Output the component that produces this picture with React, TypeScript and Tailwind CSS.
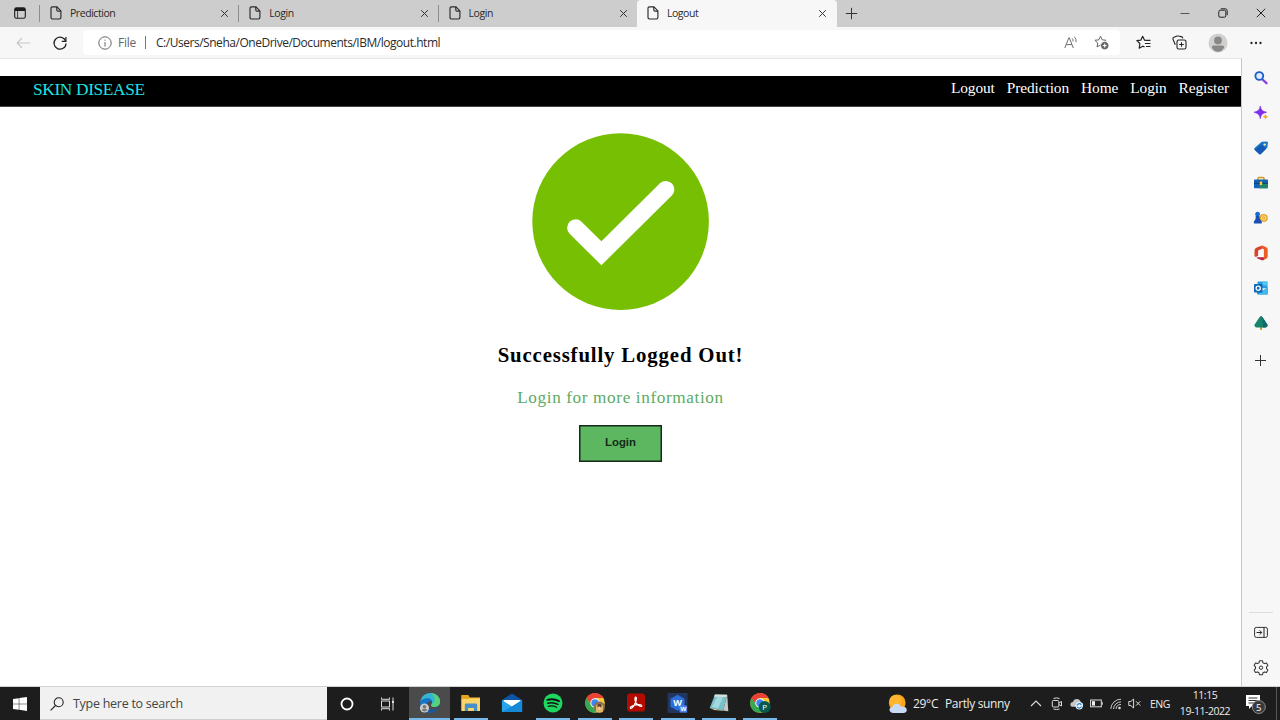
import type { ReactNode } from "react";

const UI = "font-['Open_Sans','Noto_Sans',sans-serif]";

function Cross() {
  return (
    <svg width="9" height="9" viewBox="0 0 9 9" fill="none" stroke="#333" strokeWidth="1">
      <path d="M1.2 1.2 7.8 7.8M7.8 1.2 1.2 7.8" />
    </svg>
  );
}

function PageIcon() {
  return (
    <svg width="12" height="14" viewBox="0 0 12 14" fill="none" stroke="#2a2a2a" strokeWidth="1.15">
      <path d="M2.4 .9H7l3.9 4v6.7c0 .9-.5 1.4-1.4 1.4H2.4C1.5 13 1 12.500 1 11.600V2.300C1 1.400 1.500.9 2.400.9Z" />
      <path d="M6.800 1v2.900c0 .8.4 1.200 1.200 1.200h2.900" />
    </svg>
  );
}

function Tab({ title, active }: { title: string; active?: boolean }) {
  return (
    <div
      className={
        active
          ? "-ml-px flex h-[27px] w-[200px] items-center rounded-t-[4px] bg-[#f7f7f7] pb-px pl-[10px] pr-[10px]"
          : "flex h-[27px] w-[199.300px] items-center pb-px pl-[10px] pr-[10px]"
      }
    >
      <PageIcon />
      <span className="ml-[8px] flex-1 text-[10.5px] leading-[14px] tracking-[-0.450px] text-[#2a2a2a]">{title}</span>
      <Cross />
    </div>
  );
}

function TabBar() {
  return (
    <div className="flex h-[27px] items-center bg-[#cdcdcd]">
      <div className="flex w-[39px] justify-center pb-px pl-px">
        <svg width="12" height="12" viewBox="0 0 12 12" fill="none" stroke="#1c1c1c">
          <rect x=".7" y=".7" width="10.600" height="10.600" rx="1.800" strokeWidth="1.100" />
          <path d="M1 2.500h10" strokeWidth="3" />
          <path d="M3.600 4v7" strokeWidth=".8" />
        </svg>
      </div>
      <div className="h-[17px] w-px bg-[#8d8d8d]" />
      <Tab title="Prediction" />
      <div className="-ml-px h-[17px] w-px bg-[#8d8d8d]" />
      <Tab title="Login" />
      <div className="-ml-px h-[17px] w-px bg-[#8d8d8d]" />
      <Tab title="Login" />
      <Tab title="Logout" active />
      <svg className="mb-px ml-[8px]" width="13" height="13" viewBox="0 0 13 13" stroke="#333" strokeWidth="1">
        <path d="M6.500 .8v11.400M.8 6.500h11.400" />
      </svg>
      <div className="ml-auto flex items-center gap-[28px] pb-px pr-[14px]">
        <svg width="10" height="10" viewBox="0 0 10 10" stroke="#555"><path d="M.5 5.500h9" /></svg>
        <svg width="10" height="10" viewBox="0 0 10 10" fill="none" stroke="#222">
          <rect x=".8" y="2.200" width="7" height="7" rx="1.300" />
          <path d="M2.800 .8h4.400c1.300 0 2 .7 2 2v4.400" />
        </svg>
        <svg width="10" height="10" viewBox="0 0 10 10" stroke="#222"><path d="M.8 .8l8.400 8.400M9.200 .8.8 9.200" /></svg>
      </div>
    </div>
  );
}

const STAR = "M6.500 1.200 8.200 4.800l3.900.5-2.900 2.700.8 3.900-3.500-1.900L3 11.900l.8-3.900L.9 5.300l3.900-.5Z";

function Toolbar() {
  return (
    <div className="flex h-[32px] items-center bg-[#f7f7f7] pb-px">
      <svg className="ml-[16px]" width="15" height="12" viewBox="0 0 15 12" fill="none" stroke="#c6c6c6" strokeWidth="1.100">
        <path d="M14 6H1.200M6 1 1.100 6 6 11" />
      </svg>
      <svg className="ml-[21px]" width="16" height="16" viewBox="0 0 16 16" fill="none" stroke="#222" strokeWidth="1.250">
        <path d="M13.700 6.300A6 6 0 1 0 14 8.400" />
        <path d="M13.900 2v4.300H9.800" />
      </svg>
      <div className="ml-[15px] flex h-[25px] w-[1037px] items-center rounded-[4px] bg-white pl-[15px] pr-[11px]">
        <svg width="14" height="14" viewBox="0 0 14 14" fill="none" stroke="#666" strokeWidth="1">
          <circle cx="7" cy="7" r="6.200" />
          <path d="M7 6v4.500M7 3.600v1.200" />
        </svg>
        <span className="ml-[6px] w-[18px] whitespace-nowrap text-[12px] leading-[16px] tracking-[-0.250px] text-[#666]">File</span>
        <div className="ml-[9px] h-[13px] w-px bg-[#777]" />
        <span className="ml-[10px] flex-1 whitespace-nowrap text-[12px] leading-[16px] tracking-[-0.470px] text-[#2b2b2b]">
          C:/Users/Sneha/OneDrive/Documents/IBM/logout.html
        </span>
        <svg width="14" height="13" viewBox="0 0 14 13" fill="none" stroke="#666" strokeWidth=".95">
          <path d="M.8 12 4.900 1.800h.4L9.300 12M2.200 8.600h5.700" />
          <path d="M8.200 2.400q1.300 1.300.8 3M10.300 .8q2.400 2.300 1.700 5.300" />
        </svg>
        <svg className="ml-[16px]" width="15" height="15" viewBox="0 0 15 15" fill="none" stroke="#666">
          <path d={STAR} strokeLinejoin="round" />
          <circle cx="10.700" cy="10.600" r="4.200" fill="#666" stroke="#fff" strokeWidth=".8" />
          <path d="M10.700 8.600v4M8.700 10.600h4" stroke="#fff" />
        </svg>
      </div>
      <svg className="ml-[16px]" width="15" height="15" viewBox="0 0 14 14" fill="none" stroke="#222" strokeWidth="1.100" strokeLinejoin="round">
        <path d="M8.500 5 8 4.900 6.200 1.200 4.500 4.800.8 5.300l2.800 2.600L3 12.300l3.300-1.900 1.700.8M8.600 5H13.500M8.300 7.900h5.200M9.300 10.700h4.200" />
      </svg>
      <svg className="ml-[21px]" width="15" height="15" viewBox="0 0 15 15" fill="none" stroke="#222" strokeWidth="1.100">
        <rect x="5" y="5" width="9" height="9" rx="1.800" />
        <path d="M9.500 7.200v4.600M7.200 9.500h4.600" />
        <path d="M3.300 9.700 1.100 4.500C.7 3.400 1 2.600 2 2.200L5 1.100c1.200-.4 2.300-.1 3.500.3 1.300.3 2 .7 2.500 1.900" />
      </svg>
      <svg className="ml-[21px]" width="20" height="20" viewBox="0 0 20 20">
        <circle cx="10" cy="10" r="9.500" fill="#d2d0ce" />
        <circle cx="10" cy="7.400" r="3.900" fill="#8a8886" />
        <path d="M3.800 14.200q0-1.700 1.800-1.700h8.800q1.800 0 1.800 1.700-2.200 4.600-6.200 4.600t-6.200-4.600Z" fill="#8a8886" />
      </svg>
      <svg className="ml-[22px]" width="12" height="4" viewBox="0 0 12 4" fill="#222">
        <circle cx="1.500" cy="2" r="1.150" /><circle cx="6" cy="2" r="1.150" /><circle cx="10.500" cy="2" r="1.150" />
      </svg>
    </div>
  );
}

function SideItem({ children }: { children: ReactNode }) {
  return (
    <div className="flex h-[35px] shrink-0 items-center justify-center">
      <svg width="16" height="16" viewBox="0 0 16 16" fill="none">{children}</svg>
    </div>
  );
}

function Sidebar() {
  return (
    <aside className="flex w-[39px] flex-col border-l border-[#c9c9c9] bg-[#f7f7f7] pt-[2px]">
      <SideItem>
        <path d="m9.500 9.500 4 3.700" stroke="#8b3fd9" strokeWidth="2.300" strokeLinecap="round" />
        <circle cx="6.300" cy="6" r="3.900" fill="#dcecff" stroke="#1c5fc6" strokeWidth="1.900" />
      </SideItem>
      <SideItem>
        <path d="M7.300 1c.9 4 1.700 5 6.200 6.300-4.500 1.200-5.300 2.300-6.200 6.400C6.400 9.600 5.500 8.500 1 7.300 5.500 6 6.400 5 7.300 1Z" fill="#7a2ee6" stroke="#8f3af0" strokeWidth=".8" />
        <path d="M12.400 8.800c.5 2 .9 2.400 2.900 2.900-2 .5-2.400 1-2.900 3-.5-2-.9-2.500-2.900-3 2-.5 2.400-.9 2.900-2.900Z" fill="#f0a91e" />
      </SideItem>
      <SideItem>
        <path d="M8.700 1.800 14 1.500c.6 0 .9.300.9.900l-.5 5.200-6.500 6.500c-.6.6-1.200.6-1.800 0L1.600 9.800c-.6-.6-.6-1.200 0-1.800Z" fill="#1877c8" />
        <path d="m1.600 9.800 6.600-5 5 4-5.300 5.300c-.6.6-1.200.6-1.800 0Z" fill="#1559b4" />
        <circle cx="11.700" cy="4.600" r="1.200" fill="#ffe6a4" />
      </SideItem>
      <SideItem>
        <path d="M5 5V3.400c0-.7.300-1 1-1h4c.7 0 1 .3 1 1V5" stroke="#d69a1e" strokeWidth="1.500" />
        <path d="M1 5.600c0-.7.400-1.100 1.100-1.100h11.800c.7 0 1.100.4 1.100 1.100v6.600c0 .7-.4 1.100-1.100 1.100H2.100c-.7 0-1.100-.4-1.100-1.100Z" fill="#1262b3" />
        <path d="M6 8.500h9v3.700c0 .7-.4 1.100-1.100 1.100H6Z" fill="#21856b" />
        <rect x="1" y="7.900" width="14" height="1" fill="#0b456f" />
        <rect x="6.800" y="6.600" width="2.400" height="3.500" rx=".6" fill="#ffc83d" />
      </SideItem>
      <SideItem>
        <circle cx="10.700" cy="8" r="4.100" fill="#e7a52c" />
        <circle cx="10.700" cy="8" r="2.200" stroke="#ffe29b" />
        <circle cx="10.700" cy="8" r=".8" fill="#ffe29b" />
        <circle cx="4.600" cy="4.200" r="2.400" fill="#1e68d2" />
        <path d="M2.600 6h4c-.2 2 .2 3.300 1.600 4.800.8.800.8 2.200.3 2.700H1.200c-.6-.8-.5-1.800.2-2.700C2.700 9.300 2.900 8 2.600 6Z" fill="#174fb5" />
      </SideItem>
      <SideItem>
        <path d="M9.300.6 5 2.100C2.500 3 1.500 4 1.500 6v4.500c0 1 .9 1.700 1.900 1.200l1.700-.9V6.300c0-.7.300-1.100 1-1.400L9.600 3.600Z" fill="#d8432b" />
        <path d="m9.300.6 3.500 1.500c1.200.5 1.900 1.300 1.900 2.700v6.400c0 1.400-.7 2.200-1.900 2.700L9.300 15.400 10.900 12V4.500L9.600 3.600 7.500 2Z" fill="#ea5b26" />
        <path d="M4.500 12.200h6.400v1.500c0 1-.8 1.900-2 1.500L4.500 13.600c-1-.4-.9-1.400 0-1.400Z" fill="#b92442" />
      </SideItem>
      <SideItem>
        <path d="M4.500 2.200c0-.5.200-.7.700-.7h8.600c.5 0 .7.200.7.700v6h-10Z" fill="#299be0" />
        <path d="M9.500 1.500h5v4h-5Z" fill="#50c8f1" />
        <path d="m15 7-5.500 4L4 8v5.500c0 .6.300.9.900.9h9.200c.6 0 .9-.3.900-.9Z" fill="#239ddc" />
        <path d="M15 7 5 14.400h9.100c.6 0 .9-.3.900-.9Z" fill="#42b9ec" />
        <rect x="1" y="4" width="8.500" height="8.500" rx=".8" fill="#0d68b8" />
        <circle cx="5.200" cy="8.200" r="2.100" stroke="#fff" strokeWidth="1.300" />
      </SideItem>
      <SideItem>
        <path d="M7 11h2v4H7Z" fill="#d79b2d" />
        <path d="M8 1c1.300.4 1.500 1.700 3.200 3.700 1.300 1.500 1 2.100 1.900 3 1.600 1.800 1.800 2.600 1 3.700-.5.800-1.200 1-2.400 1H4.300c-1.200 0-1.900-.2-2.400-1-.8-1.100-.6-1.900 1-3.700.9-.9.600-1.500 1.900-3C6.500 2.700 6.700 1.400 8 1Z" fill="#16836d" />
        <path d="M8 1c1.300.4 1.500 1.700 3.200 3.700 1.300 1.500 1 2.100 1.900 3 1.600 1.800 1.800 2.600 1 3.700-.5.800-1.200 1-2.400 1H9.500C11 9 9 4 8 1Z" fill="#126a68" />
      </SideItem>
      <div className="flex h-[40px] items-center justify-center pr-[2px]">
        <svg width="12" height="12" viewBox="0 0 12 12" stroke="#333"><path d="M6.500 1v11M1 6.500h11" /></svg>
      </div>
      <div className="mt-auto ml-[7px] h-px w-[24px] bg-[#dcdcdc]" />
      <div className="mt-[2px]">
        <SideItem>
          <rect x="1.600" y="2.400" width="12.800" height="10" rx="1.700" stroke="#333" />
          <path d="M11 2.500v10M3.600 7.500h5M6.600 5.300 8.800 7.500l-2.200 2.200" stroke="#222" />
        </SideItem>
        <SideItem>
          <path
            d="M6.500 .8h3l.5 2 1.500.8 2-.6 1.400 2.500-1.400 1.400v1.700l1.400 1.400-1.400 2.500-2-.6-1.500.9-.5 1.900h-3L6 12.800l-1.500-.9-2 .6-1.400-2.500 1.400-1.400V6.900L1.100 5.500l1.400-2.500 2 .6L6 2.800Z"
            stroke="#333" strokeWidth="1.050" strokeLinejoin="round"
          />
          <circle cx="8" cy="7.700" r="1.700" stroke="#333" />
        </SideItem>
      </div>
      <div className="h-px" />
    </aside>
  );
}

function LogoutPage() {
  return (
    <main className="flex w-[1241px] flex-col items-center border-t border-[#e6e6e6] bg-white pt-[17px] font-['Liberation_Serif',serif]">
      <nav className="flex h-[31px] w-full items-start border-b border-[#444] bg-black pl-[33px] pr-[12px] text-white">
        <span className="mt-[3px] text-[17.300px] leading-[22px] tracking-[-0.330px] text-[#1fe3e3]">SKIN DISEASE</span>
        <div className="ml-auto mt-[2px] flex gap-[12px] text-[15.400px] leading-[20px] tracking-[-0.100px]">
          <a>Logout</a>
          <a>Prediction</a>
          <a>Home</a>
          <a>Login</a>
          <a>Register</a>
        </div>
      </nav>
      <svg className="-ml-px mt-[26px]" width="178" height="178" viewBox="0 0 178 178">
        <circle cx="89.600" cy="88.600" r="88.300" fill="#76bf02" />
        <path d="M44.600 94.800 70.400 120.300 134.900 56.400" fill="none" stroke="#fff" strokeWidth="17" strokeLinecap="round" strokeLinejoin="miter" />
      </svg>
      <h2 className="mt-[32px] text-[20.800px] font-bold leading-[24px] tracking-[0.850px] text-black">Successfully Logged Out!</h2>
      <p className="mt-[21px] text-[17.200px] leading-[20px] tracking-[0.620px] text-[#5cab63]">Login for more information</p>
      <button className="mt-[17px] flex h-[37px] w-[83px] items-center justify-center border border-[#152a18] bg-[#5db761] pb-px font-['Liberation_Sans',sans-serif] text-[11.400px] font-bold text-[#152a18] shadow-[inset_0_0_0_0.500px_#152a18]">
        Login
      </button>
    </main>
  );
}

function Task({ children, active, idle }: { children: ReactNode; active?: boolean; idle?: boolean }) {
  return (
    <div className={active ? "flex h-full w-[41px] flex-col items-center bg-[#4b4b4b]" : "flex h-full w-[41.400px] flex-col items-center"}>
      <div className="flex flex-1 items-center pt-px">
        <svg width="22" height="22" viewBox="0 0 22 22" fill="none">{children}</svg>
      </div>
      <div className={active ? "h-[2px] w-full bg-[#76b9ed]" : idle ? "h-[2px] w-[34px]" : "h-[2px] w-[34px] bg-[#76b9ed]"} />
    </div>
  );
}

function ChromeMark() {
  return (
    <>
      <circle cx="11" cy="11" r="9.800" fill="#fcc934" />
      <path d="M11 11 2.500 6.100A9.800 9.800 0 0 1 19.500 6.100H11Z" fill="#ea4335" />
      <path d="M2.500 6.100A9.800 9.800 0 0 0 11 20.800l4.300-7.400L11 11 6.800 13.400Z" fill="#34a853" />
      <path d="M2.500 6.100 6.800 13.400 11 6.100Z" fill="#34a853" />
      <path d="M2.500 6.100A9.800 9.800 0 0 1 19.500 6.100H11l-4.200 2.500-.2 2.800Z" fill="#ea4335" />
      <circle cx="11" cy="11" r="4.700" fill="#fff" />
      <circle cx="11" cy="11" r="3.700" fill="#4285f4" />
    </>
  );
}

function Taskbar() {
  return (
    <footer className="flex h-[34px] items-center border-t border-[#cfd2d2] bg-[#1d1d1d] text-[#ececec]">
      <div className="flex w-[40px] justify-center">
        <svg width="14" height="14" viewBox="0 0 14 14" fill="#fff">
          <path d="M0 2 5.800 1.200v5.500H0ZM6.300 1.100 14 0v6.700H6.300ZM0 7.200h5.800v5.500L0 11.900ZM6.300 7.200H14V14l-7.700-1.200Z" />
        </svg>
      </div>
      <div className="flex h-full w-[286.500px] items-center border-b border-[#d0d0d0] bg-[#f1f1f1] pl-[10px] pt-px">
        <svg width="14" height="14" viewBox="0 0 14 14" fill="none" stroke="#222" strokeWidth="1.100">
          <circle cx="8.700" cy="5.300" r="4.500" /><path d="M5.500 8.500.6 13.400" />
        </svg>
        <span className="ml-[9px] text-[12.500px] leading-[18px] tracking-[-0.270px] text-[#444]">Type here to search</span>
      </div>
      <div className="flex w-[40px] justify-center">
        <svg width="14" height="14" viewBox="0 0 14 14" fill="none" stroke="#fff" strokeWidth="1.800"><circle cx="7" cy="7" r="5.500" /></svg>
      </div>
      <div className="flex w-[42.500px] justify-center">
        <svg width="15" height="14" viewBox="0 0 15 14" fill="none" stroke="#ddd">
          <rect x="1.500" y="4" width="8" height="6" />
          <path d="M1.500 .5v1.800h8V.5M1.500 13.500v-1.800h8v1.800M13 .5v13" />
          <rect x="12.200" y="4" width="1.600" height="2" fill="#fff" stroke="none" />
        </svg>
      </div>
      <Task active>
        <path d="M1.200 10C2 4.800 6 1 11.300 1c5.700 0 9.800 4.100 9.800 8.600 0 3.400-2.400 5.400-5.600 5.400-2.600 0-4-1-3.300-2.200 2-2.500.3-6.200-3.600-6.200-3.300 0-6 1.500-7.400 3.400Z" fill="#35b5d6" />
        <path d="M11.300 1c5.700 0 9.800 4.100 9.800 8.600 0 3.400-2.400 5.400-5.600 5.400-2.600 0-4-1-3.300-2.200C17 10 17 4 11.300 1Z" fill="#55d27b" />
        <path d="M1.200 10c1.200-2.300 4-3.700 7.400-3.700 2.200 0 4 1.200 4.400 3-2.600-.8-5 1.100-5 4 0 4 3.500 6.500 8 5.400-1.600 1.300-3 2-5 2C4.500 20.700.6 15.400 1.200 10Z" fill="#1477cd" />
        <path d="M8 13.300c0 4.500 5.200 6.300 11.500 2.200-2 3.500-5 5.200-8.500 5.200-3 0-5-3-5-6 0-3 3-5.800 7-5.400-2.600-.8-5 1.100-5 4Z" fill="#1559a6" />
        <circle cx="5.500" cy="16" r="4.600" fill="#c9c9c9" />
        <circle cx="5.500" cy="14.700" r="1.800" fill="#777" /><path d="M2.800 18q.2-1.300 2.700-1.300T8.200 18q-1 1.400-2.700 1.400T2.800 18Z" fill="#777" />
      </Task>
      <Task>
        <path d="M1.500 3.500h6l1.500 2h11v13h-18.500Z" fill="#f5c445" />
        <path d="M1.500 3h6.800l1.400 2.500-1.400 1.500H1.500Z" fill="#e5a51d" />
        <path d="M1.500 7H20v12H1.500Z" fill="#fbd56a" />
        <path d="M4.800 19v-6.200q0-1.300 1.300-1.300h9.800q1.300 0 1.300 1.300V19h-3.300v-3H8.100v3Z" fill="#4692c8" />
      </Task>
      <Task idle>
        <path d="m.9 8 10.100-6.500L21.100 8v3H.9Z" fill="#0a55a5" />
        <path d="M2.500 8h17v7h-17Z" fill="#fff" />
        <path d="M.9 8 11 14.500 21.100 8v12H.9Z" fill="#28a4ea" />
        <path d="m.9 20 12-6.800L21.100 8v12Z" fill="#1389d8" />
      </Task>
      <Task>
        <circle cx="11" cy="11" r="9.500" fill="#1ed760" />
        <path d="M5.300 7.900q6.300-1.700 11.700 1.200" stroke="#111" strokeWidth="1.800" strokeLinecap="round" />
        <path d="M5.800 11.200q5.300-1.400 10.100 1.100" stroke="#111" strokeWidth="1.500" strokeLinecap="round" />
        <path d="M6.200 14.300q4.700-1 8.500 1" stroke="#111" strokeWidth="1.200" strokeLinecap="round" />
      </Task>
      <Task>
        <ChromeMark />
        <circle cx="15.400" cy="15" r="5.600" fill="#8b7152" />
        <path d="M12 13.500q3.500-4 7 0v6.200q-3.500 2-7 0Z" fill="#e0b56a" />
        <circle cx="15.500" cy="13.700" r="2.200" fill="#614334" />
        <circle cx="15.300" cy="16" r="1.500" fill="#f4d28d" />
      </Task>
      <Task>
        <rect x="2" y="1.500" width="18" height="18" rx="2.800" fill="#b30b00" />
        <path d="M5.500 16.300c-1-1 1.500-2.800 5.500-3.400 3.800-.6 6.300.2 5.700 1.200-.9 1.200-4.200-1-5.700-3.200C9.700 8.700 9.600 5.200 10.700 5.200s1 3.300-1.200 7.200c-1.400 2.800-3.100 4.700-4 3.900Z" stroke="#fff" strokeWidth="1.200" />
      </Task>
      <Task>
        <rect x=".6" y="1" width="20" height="20" fill="#22365f" />
        <path d="m10.500 2.800 7 4v8l-7 4-7-4v-8Z" fill="#2b6edb" />
        <text x="10.500" y="14" textAnchor="middle" fontSize="9" fontWeight="700" fill="#fff">W</text>
        <rect x="12.500" y="13.500" width="7.500" height="7" rx=".8" fill="#4a86ee" />
        <text x="16.300" y="19.300" textAnchor="middle" fontSize="6" fontWeight="700" fill="#fff">W</text>
      </Task>
      <Task>
        <path d="m7 2.500 12.200.2-4 15.800L1.700 16Z" fill="#77bfc9" />
        <path d="m7 2.500 12.200.2-.6 2.400L6 4.700Z" fill="#dadfdc" />
        <path d="m19.200 2.700 1.100 16.500-5.100-.7Z" fill="#c4c9c5" />
        <path d="m1.700 16 13.500 2.500 5.100.7-14-1.200Z" fill="#e9d9a0" />
        <path d="m9 5-5 10 6 1.200 5-11Z" fill="#a2d9df" />
      </Task>
      <Task>
        <ChromeMark />
        <circle cx="15.700" cy="15" r="6" fill="#075b4e" />
        <text x="15.700" y="18" textAnchor="middle" fontSize="8" fill="#fff">P</text>
      </Task>
      <div className="ml-auto flex h-full items-center">
        <svg width="20" height="20" viewBox="0 0 20 20">
          <circle cx="9.200" cy="8.800" r="8.400" fill="#f8a51c" />
          <circle cx="7.500" cy="7" r="6" fill="#ffb52e" />
          <path d="M5.500 19c-2.400 0-4-1.300-4-3.200 0-1.700 1.300-2.900 3-3 .8-2 2.300-3 4.300-3 2.100 0 3.600 1.100 4.200 2.900 3.200-.6 5.800 1 5.800 3.300 0 1.900-1.500 3-3.500 3Z" fill="#c8daf5" />
        </svg>
        <span className="ml-[5px] w-[32px] whitespace-nowrap text-[12px] leading-[16px] tracking-[-0.300px]">29°C</span>
        <span className="w-[85px] whitespace-nowrap text-[12px] leading-[16px] tracking-[-0.370px]">Partly sunny</span>
        <svg width="12" height="7" viewBox="0 0 12 7" fill="none" stroke="#ddd" strokeWidth="1.100"><path d="m1 6 5-5 5 5" /></svg>
        <svg className="ml-[9px]" width="12" height="13" viewBox="0 0 12 13" fill="none" stroke="#ddd">
          <rect x="1.300" y="3.500" width="6.500" height="6.500" rx="1" /><path d="m8 6 2.500-1.500V9L8 7.500M2.500 1.500q3-1.200 6 0M2.500 12q3 1 6 0" />
        </svg>
        <svg className="ml-[7px]" width="14" height="13" viewBox="0 0 14 13">
          <path d="M3 9.800C1.300 9.700.4 8.700.4 7.400S1.500 5 2.900 5C3.500 3 4.900 2 6.800 2c2.200 0 3.700 1.500 4 3.400 1.400.1 2.400 1 2.400 2.300 0 1.200-1 2.100-2.400 2.100Z" fill="#c5c8cb" />
          <circle cx="9.200" cy="8.800" r="3.700" fill="#e8f4ff" />
          <path d="M6.900 8.300q2.300-3 4.500-.4M11.600 9.500q-2.300 3-4.500.4" fill="none" stroke="#2783cc" strokeWidth="1.200" />
        </svg>
        <svg className="ml-[6px]" width="13" height="9" viewBox="0 0 13 9" fill="none" stroke="#ddd">
          <rect x=".6" y="1" width="10.700" height="6.800" /><path d="M12.200 3v2.800" /><path d="M2 2.200h3v4.400H2Z" fill="#eee" stroke="none" />
        </svg>
        <svg className="ml-[7px]" width="12" height="12" viewBox="0 0 12 12" fill="none" stroke="#c8c8c8">
          <path d="M.8 11A10.200 10.200 0 0 1 11 1.200M3.500 11A7.500 7.500 0 0 1 11 3.900M6 11a5 5 0 0 1 5-4.500" /><circle cx="9.500" cy="10" r="1.300" fill="#ddd" stroke="none" />
        </svg>
        <svg className="ml-[6px]" width="13" height="11" viewBox="0 0 13 11" fill="none" stroke="#ddd">
          <path d="M.8 3.500h2L5.600 1v9L2.800 7.500h-2ZM8 3.300l4.300 4.300M12.300 3.300 8 7.600" />
        </svg>
        <span className="ml-[9px] w-[20px] whitespace-nowrap text-[10.500px] leading-[14px] tracking-[-0.500px]">ENG</span>
        <div className="ml-[7px] w-[56px] whitespace-nowrap text-center text-[10.500px] leading-[15.500px] tracking-[-0.450px]">
          <div>11:15</div>
          <div>19-11-2022</div>
        </div>
        <svg className="ml-[12px] mt-px" width="22" height="22" viewBox="0 0 22 22">
          <path d="M1 2h14v11H7l-3 3v-3H1Z" fill="#fff" />
          <path d="M3.500 5h9M3.500 7.500h9M3.500 10h6" stroke="#333" />
          <circle cx="13.800" cy="14" r="6.500" fill="#3a3a3a" stroke="#8c8c8c" />
          <text x="13.800" y="17.500" textAnchor="middle" fontSize="9.500" fill="#fff">5</text>
        </svg>
        <div className="ml-[9px] mr-[3px] h-full w-px bg-[#555]" />
      </div>
    </footer>
  );
}

export default function App() {
  return (
    <div className={`flex h-[720px] w-[1280px] flex-col overflow-hidden bg-[#f7f7f7] ${UI}`}>
      <TabBar />
      <Toolbar />
      <div className="-mt-px flex flex-1">
        <LogoutPage />
        <Sidebar />
      </div>
      <Taskbar />
    </div>
  );
}
